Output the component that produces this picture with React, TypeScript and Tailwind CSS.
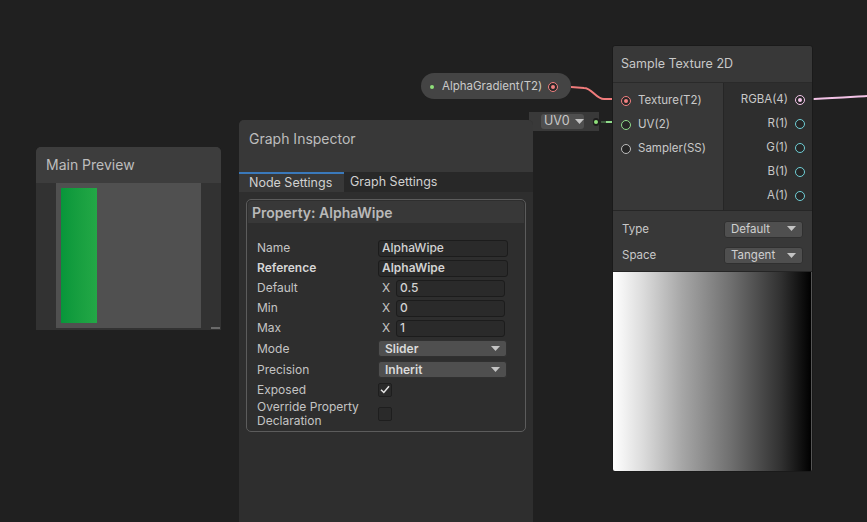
import React from "react";

const font = { fontFamily: "Inter, 'Noto Sans', sans-serif" };

function Port({ ring, fill }: { ring: string; fill?: string }) {
  return (
    <span
      className="flex h-[10px] w-[10px] shrink-0 items-center justify-center rounded-full border-[1.5px] bg-[#262626]"
      style={{ borderColor: ring }}
    >
      {fill && <span className="h-[4px] w-[4px] rounded-full" style={{ background: fill }} />}
    </span>
  );
}

function Caret() {
  return (
    <svg width="9" height="6" viewBox="0 0 9 6" className="shrink-0">
      <path d="M0 0 H9 L4.5 5 Z" fill="#c4c4c4" />
    </svg>
  );
}

function Dropdown({ value, className }: { value: string; className: string }) {
  return (
    <div className={`flex items-center justify-between rounded-[3px] border border-[#303030] bg-[#4f4f4f] pl-[6px] pr-[6px] ${className}`}>
      <span>{value}</span>
      <Caret />
    </div>
  );
}

function MainPreview() {
  return (
    <div className="absolute left-[36px] top-[147px] flex h-[183px] w-[185px] flex-col overflow-hidden rounded-t-[5px] bg-[#323232]">
      <div className="flex h-[36px] shrink-0 items-center bg-[#3d3d3d] px-[10px] pb-[2px] text-[14px] text-[#bdbdbd]">
        Main Preview
      </div>
      <div className="relative flex flex-1">
        <div className="ml-[20px] h-[145px] w-[145px] bg-[#505050] p-[5px]">
          <div className="h-[135px] w-[36px] bg-gradient-to-r from-[#07963a] to-[#23a846]" />
        </div>
        <div className="absolute bottom-[1px] right-[1px] h-[2px] w-[9px] bg-[#6a6a6a]" />
      </div>
    </div>
  );
}

function Field({ children, bold }: { children: React.ReactNode; bold?: boolean }) {
  return (
    <div className={`flex h-[17px] w-[130px] items-center rounded-[3px] border border-[#1c1c1c] bg-[#2a2a2a] px-[3px] text-[#d2d2d2] ${bold ? "font-semibold" : "font-medium"}`}>
      {children}
    </div>
  );
}

function VecField({ value }: { value: string }) {
  return (
    <div className="flex w-[130px] items-center">
      <span className="w-[18px] pl-[4px] text-[#c4c4c4]">X</span>
      <div className="flex h-[17px] w-[109px] items-center rounded-[3px] border border-[#1c1c1c] bg-[#2a2a2a] px-[3px] font-medium text-[#d2d2d2]">
        {value}
      </div>
    </div>
  );
}

function Row({ label, children, bold, h = "h-[20px]" }: { label: React.ReactNode; children: React.ReactNode; bold?: boolean; h?: string }) {
  return (
    <div className={`flex items-center ${h}`}>
      <div className={`w-[121px] leading-[14px] ${bold ? "font-semibold text-[#d6d6d6]" : "text-[#c4c4c4]"}`}>{label}</div>
      {children}
    </div>
  );
}

function Checkbox({ checked }: { checked?: boolean }) {
  return (
    <div className="flex h-[14px] w-[14px] items-center justify-center rounded-[2px] border border-[#1e1e1e] bg-[#2a2a2a]">
      {checked && (
        <svg width="10" height="9" viewBox="0 0 10 9">
          <path d="M1 4.8 L3.8 7.5 L9 1.2" stroke="#e6e6e6" strokeWidth="1.5" fill="none" />
        </svg>
      )}
    </div>
  );
}

function GraphInspector() {
  return (
    <div className="absolute left-[239px] top-[120px] flex h-[410px] w-[294px] flex-col overflow-hidden rounded-t-[5px] bg-[#2e2e2e]">
      <div className="h-[52px] shrink-0 bg-[#383838] px-[10px] pt-[8px] text-[14px] text-[#bdbdbd]">Graph Inspector</div>
      <div className="flex h-[20px] shrink-0 bg-[#282828] text-[12.5px] text-[#d0d0d0]">
        <div className="flex w-[105px] items-center border-t-2 border-[#3a79bb] bg-[#383838] pl-[10px]">Node Settings</div>
        <div className="flex items-center pl-[6px]">Graph Settings</div>
      </div>
      <div className="px-[7px] pt-[7px]">
        <div className="h-[233px] rounded-[5px] border border-[#5c5c5c] p-[1px] text-[12px]">
          <div className="flex h-[22px] items-center rounded-t-[4px] bg-[#383838] px-[4px] pt-[1px] text-[14px] font-semibold text-[#b9b9b9]">
            Property: AlphaWipe
          </div>
          <div className="px-[9px] pt-[15px]">
            <Row label="Name"><Field>AlphaWipe</Field></Row>
            <Row label="Reference" bold><Field bold>AlphaWipe</Field></Row>
            <Row label="Default"><VecField value="0.5" /></Row>
            <Row label="Min"><VecField value="0" /></Row>
            <Row label="Max"><VecField value="1" /></Row>
            <Row label="Mode" h="h-[21px]">
              <Dropdown value="Slider" className="h-[17px] w-[129px] font-semibold text-[#dadada]" />
            </Row>
            <Row label="Precision" h="h-[21px]">
              <Dropdown value="Inherit" className="h-[17px] w-[129px] font-semibold text-[#dadada]" />
            </Row>
            <Row label="Exposed" h="h-[19px]"><Checkbox checked /></Row>
            <Row label={<>Override Property<br />Declaration</>} h="h-[30px]"><Checkbox /></Row>
          </div>
        </div>
      </div>
    </div>
  );
}

function InPort({ label, ring, fill }: { label: string; ring: string; fill?: string }) {
  return (
    <div className="flex h-[24px] items-center gap-[7px] pl-[8px]">
      <Port ring={ring} fill={fill} />
      <span>{label}</span>
    </div>
  );
}

function OutPort({ label, ring, fill }: { label: string; ring: string; fill?: string }) {
  return (
    <div className="flex h-[24px] items-center justify-end gap-[7px] pr-[7px]">
      <span>{label}</span>
      <Port ring={ring} fill={fill} />
    </div>
  );
}

function SampleTexture() {
  const cyan = "#6fcfd6";
  return (
    <div className="absolute left-[612px] top-[45px] flex h-[427px] w-[201px] flex-col overflow-hidden rounded-[3px] border border-[#1a1a1a] bg-[#383838] text-[11.5px] text-[#c8c8c8]">
      <div className="flex h-[37px] shrink-0 items-center border-b border-[#2a2a2a] pl-[8px] text-[12.5px] text-[#c8c8c8]">
        Sample Texture 2D
      </div>
      <div className="flex h-[128px] shrink-0 border-b border-[#262626]">
        <div className="w-[110px] pt-[6px]">
          <InPort label="Texture(T2)" ring="#f08080" fill="#f08080" />
          <InPort label="UV(2)" ring="#8fdc8a" />
          <InPort label="Sampler(SS)" ring="#bcbcbc" />
        </div>
        <div className="flex-1 border-l border-[#262626] bg-[#2e2e2e] pt-[5px]">
          <OutPort label="RGBA(4)" ring="#f4c6ea" fill="#f4c6ea" />
          <OutPort label="R(1)" ring={cyan} />
          <OutPort label="G(1)" ring={cyan} />
          <OutPort label="B(1)" ring={cyan} />
          <OutPort label="A(1)" ring={cyan} />
        </div>
      </div>
      <div className="flex h-[61px] shrink-0 flex-col justify-center gap-[9px] border-b border-[#252525] px-[9px] pt-[3px]">
        <div className="flex items-center justify-between">
          <span>Type</span>
          <Dropdown value="Default" className="h-[17px] w-[79px] text-[#cfcfcf]" />
        </div>
        <div className="flex items-center justify-between">
          <span>Space</span>
          <Dropdown value="Tangent" className="h-[17px] w-[79px] text-[#cfcfcf]" />
        </div>
      </div>
      <div className="flex-1 border-r border-[#555] bg-[linear-gradient(to_right,#ffffff_0%,#dcdcdc_15%,#a6a6a6_35%,#6e6e6e_60%,#303030_85%,#000000_100%)]" />
    </div>
  );
}

function AlphaGradient() {
  return (
    <div className="absolute left-[421px] top-[73px] flex h-[26px] w-[150px] items-center rounded-full bg-[#444444] pl-[9px] pr-[13px] pt-[2px] text-[11.5px] text-[#cacaca]">
      <span className="h-[4px] w-[4px] rounded-full bg-[#8fe07a]" />
      <span className="ml-[8px] flex-1">AlphaGradient(T2)</span>
      <Port ring="#f08080" fill="#f08080" />
    </div>
  );
}

function UvNode() {
  return (
    <div className="absolute left-[529px] top-[112px] flex h-[19px] w-[70px] items-center bg-[#393939] pl-[12px] text-[12.5px] text-[#c8c8c8]">
      <div className="flex h-[15px] w-[43px] items-center gap-[5px] rounded-[3px] bg-[#4f4f4f] pl-[3px]">
        <span>UV0</span>
        <Caret />
      </div>
      <span className="ml-[9px] flex h-[8px] w-[8px] items-center justify-center rounded-full bg-[#1d1d1d]">
        <span className="h-[4px] w-[4px] rounded-full bg-[#8fe07a]" />
      </span>
    </div>
  );
}

export default function App() {
  return (
    <div className="relative h-[522px] w-[867px] overflow-hidden bg-[#202020]" style={font}>
      <svg className="absolute left-0 top-0" width="867" height="522">
        <path d="M571 87 L584 88 C592 88 596 99 604 99 L620 99" stroke="#ef7b7b" strokeWidth="2" fill="none" />
        <path d="M601 122 L620 122" stroke="#3e5a3e" strokeWidth="2" fill="none" />
        <path d="M606 122 L621 122" stroke="#8fdc8a" strokeWidth="2" fill="none" />
        <path d="M806 99 L814 99" stroke="#5e5e5e" strokeWidth="2" fill="none" />
        <path d="M814 99 C835 98 850 97 867 96" stroke="#f3c2e6" strokeWidth="2" fill="none" />
      </svg>
      <MainPreview />
      <AlphaGradient />
      <UvNode />
      <GraphInspector />
      <SampleTexture />
    </div>
  );
}
